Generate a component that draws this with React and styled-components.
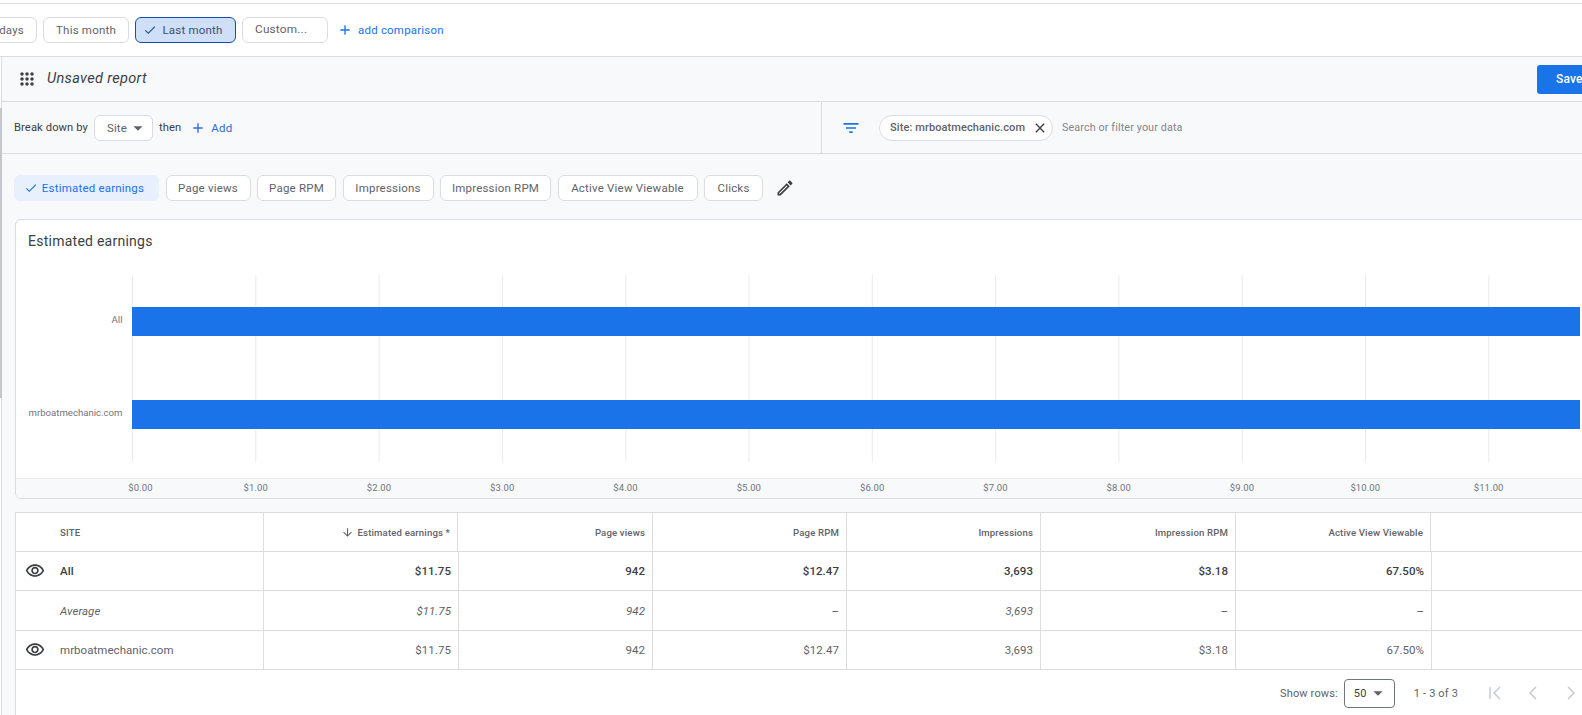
import React from 'react';
import styled, { createGlobalStyle } from 'styled-components';

const GlobalStyle = createGlobalStyle`
html, body {
  margin:0;
  padding:0;
  background:#fff;
  overflow:hidden;
}
body {
  font-family:Roboto, "Liberation Sans", sans-serif;
  color:#3c4043;
}
`;

const Page = styled.div`
width:1582px;
height:715px;
overflow:hidden;
position:relative;
background:#fff;
`;

const DateBar = styled.div`
height:52px;
margin-top:3px;
border-top:1px solid #dadce0;
border-bottom:1px solid #dadce0;
display:flex;
align-items:center;
gap:6px;
`;

const Chip = styled.div`
box-sizing:border-box;
height:26px;
width:${(p) => p.$width}px;
flex:none;
display:flex;
align-items:center;
justify-content:center;
gap:5px;
padding-right:${(p) => (p.$selected ? 5 : 0)}px;
background:${(p) => (p.$selected ? '#cfdff7' : '#fff')};
border:1px solid ${(p) => (p.$selected ? '#174ea6' : '#dadce0')};
border-radius:6px;
font-size:11.5px;
letter-spacing:0.2px;
color:${(p) => (p.$selected ? '#3c4f76' : '#5f6368')};
white-space:nowrap;
`;

const FirstDateChip = styled(Chip)`
margin-left:-40px;
justify-content:flex-end;
padding-right:12px;
`;

const CustomChip = styled(Chip)`
justify-content:flex-start;
padding:0 0 3px 12px;
font-size:11.8px;
`;

const LinkAction = styled.div`
display:flex;
align-items:center;
gap:5px;
margin-left:${(p) => p.$offset || 0}px;
font-size:11.5px;
letter-spacing:0.2px;
color:${(p) => p.$color || '#1a73e8'};
`;

const Report = styled.div`
height:658px;
margin-left:1px;
border-left:1px solid #dadce0;
background:#f8f9fa;
display:flex;
flex-direction:column;
`;

const Thumb = styled.div`
position:absolute;
left:0;
top:108px;
width:2px;
height:290px;
background:#c4c6ca;
`;

const TitleRow = styled.div`
box-sizing:border-box;
height:45px;
flex:none;
display:flex;
align-items:center;
justify-content:space-between;
padding-left:18px;
border-bottom:1px solid #dadce0;
`;

const TitleGroup = styled.div`
display:flex;
align-items:center;
gap:13px;
`;

const ReportName = styled.div`
padding-bottom:2px;
font-size:14.5px;
font-style:italic;
letter-spacing:0.35px;
color:#3c4043;
`;

const SaveButton = styled.div`
box-sizing:border-box;
width:70px;
height:29px;
margin-right:-25px;
padding-left:19px;
display:flex;
align-items:center;
background:#1a73e8;
border-radius:3px;
color:#fff;
font-size:12px;
font-weight:500;
letter-spacing:0.2px;
`;

const FilterRow = styled.div`
box-sizing:border-box;
height:52px;
flex:none;
display:flex;
border-bottom:1px solid #dadce0;
`;

const BreakdownPane = styled.div`
box-sizing:border-box;
width:820px;
flex:none;
display:flex;
align-items:center;
padding-left:12px;
border-right:1px solid #dadce0;
font-size:11.2px;
letter-spacing:0.1px;
color:#3c4043;
`;

const SiteSelect = styled.div`
box-sizing:border-box;
width:59px;
height:26px;
margin:0 6px 0 6px;
padding-left:12px;
display:flex;
align-items:center;
background:#fff;
border:1px solid #dadce0;
border-radius:6px;
font-size:11.5px;
color:#5f6368;
`;

const FilterPane = styled.div`
flex:1;
display:flex;
align-items:center;
padding-left:19px;
`;

const SiteChip = styled.div`
box-sizing:border-box;
width:174px;
height:26px;
margin-left:18px;
padding:0 4px 0 10px;
display:flex;
align-items:center;
justify-content:space-between;
background:#fff;
border:1px solid #dadce0;
border-radius:13px;
font-size:11px;
font-weight:500;
letter-spacing:0.1px;
color:#5f6368;
white-space:nowrap;
`;

const SearchHint = styled.div`
margin-left:9px;
font-size:10.7px;
letter-spacing:0.15px;
color:#80868b;
`;

const MetricRow = styled.div`
height:65px;
flex:none;
display:flex;
align-items:center;
gap:6.5px;
padding:2px 0 0 12px;
box-sizing:border-box;
`;

const MetricChip = styled(Chip)`
gap:4px;
background:${(p) => (p.$selected ? '#e8f0fe' : '#fff')};
border:1px solid ${(p) => (p.$selected ? '#e8f0fe' : '#dadce0')};
color:${(p) => (p.$selected ? '#1a73e8' : '#5f6368')};
`;

const PencilWrap = styled.div`
display:flex;
margin-left:5px;
`;

const ChartCard = styled.div`
box-sizing:border-box;
height:280px;
flex:none;
margin-left:13px;
width:1600px;
display:flex;
flex-direction:column;
background:#fff;
border:1px solid #dadce0;
border-radius:6px;
overflow:hidden;
`;

const ChartTitle = styled.div`
height:55px;
flex:none;
box-sizing:border-box;
padding:13px 0 0 12px;
font-size:14px;
letter-spacing:0.25px;
color:#3c4043;
`;

const ChartBody = styled.div`
height:187px;
flex:none;
display:flex;
`;

const BarLabels = styled.div`
box-sizing:border-box;
width:115.5px;
flex:none;
display:flex;
flex-direction:column;
padding-right:9px;
`;

const BarLabel = styled.div`
flex:1;
display:flex;
align-items:center;
justify-content:flex-end;
padding-bottom:5px;
font-size:9.6px;
color:#70757a;
white-space:nowrap;
`;

const Axis = styled.div`
margin-top:16px;
flex:1;
display:flex;
padding-left:71px;
background:#f8f9fa;
border-top:1px solid #e8eaed;
`;

const Tick = styled.div`
width:123.3px;
flex:none;
display:flex;
align-items:center;
justify-content:center;
padding-bottom:2px;
font-size:9.5px;
letter-spacing:0.1px;
color:#70757a;
&:first-child {
  width:107px;
}
`;

const TableCard = styled.div`
margin:13px 0 0 13px;
width:1600px;
flex:1;
background:#fff;
border:1px solid #dadce0;
border-bottom:none;
`;

const RowGrid = styled.div`
box-sizing:border-box;
height:${(p) => p.$height}px;
display:grid;
grid-template-columns:${(p) => (p.$header ? '248px 194px 195px 194px 194px 195px 195px 1fr' : '248px 195px 194px 194px 194px 195px 196px 1fr')};
border-bottom:1px solid #dadce0;
`;

const Cell = styled.div`
box-sizing:border-box;
display:flex;
align-items:center;
justify-content:flex-end;
padding:0 7px;
border-right:1px solid #dadce0;
white-space:nowrap;
font-size:${(p) => (p.$header ? '9.6px' : '11.5px')};
font-weight:${(p) => (p.$bold || p.$header ? 500 : 400)};
font-style:${(p) => (p.$italic ? 'italic' : 'normal')};
letter-spacing:${(p) => (p.$header ? '0.15px' : '0.05px')};
color:${(p) => (p.$bold ? '#3c4043' : '#5f6368')};
&:last-child {
  border-right:none;
}
`;

const NameCell = styled(Cell)`
justify-content:flex-start;
padding:0;
`;

const EyeSlot = styled.div`
width:44px;
flex:none;
display:flex;
justify-content:center;
padding-right:7px;
box-sizing:border-box;
`;

const SortIcon = styled.span`
display:flex;
margin-right:4px;
`;

const Pager = styled.div`
display:flex;
align-items:center;
height:46px;
padding-left:1264px;
font-size:11px;
letter-spacing:0.15px;
color:#5f6368;
`;

const RowsSelect = styled.div`
box-sizing:border-box;
width:51px;
height:29px;
margin:0 19px 0 6px;
padding-left:9px;
display:flex;
align-items:center;
border:1px solid #70757a;
border-radius:4px;
color:#3c4043;
`;

const PagerButtons = styled.div`
display:flex;
align-items:center;
gap:22px;
margin-left:29px;
`;

const Icon = ({ size = 18, color = '#5f6368', children }) => (
  <svg width={size} height={size} viewBox="0 0 24 24" fill={color} style={{ flex: 'none' }}>
    {children}
  </svg>
);

const PlusIcon = ({ color }) => (
  <Icon size={16} color={color}>
    <path d="M19 13h-6v6h-2v-6H5v-2h6V5h2v6h6v2z" />
  </Icon>
);

const CheckIcon = ({ color }) => (
  <Icon size={14} color={color}>
    <path d="M9 16.2 4.8 12l-1.4 1.4L9 19 21 7l-1.4-1.4L9 16.2z" />
  </Icon>
);

const DropIcon = ({ color = '#5f6368' }) => (
  <Icon size={22} color={color}>
    <path d="M7 10l5 5 5-5H7z" />
  </Icon>
);

const EyeIcon = () => (
  <Icon size={20} color="#3c4043">
    <path d="M12 6c3.79 0 7.17 2.13 8.82 5.5C19.17 14.87 15.79 17 12 17s-7.17-2.13-8.82-5.5C4.83 8.13 8.21 6 12 6m0-2C7 4 2.73 7.11 1 11.5 2.73 15.89 7 19 12 19s9.27-3.11 11-7.5C21.27 7.11 17 4 12 4zm0 5c1.38 0 2.5 1.12 2.5 2.5S13.38 14 12 14s-2.5-1.12-2.5-2.5S10.62 9 12 9m0-2c-2.48 0-4.5 2.02-4.5 4.5S9.52 16 12 16s4.5-2.02 4.5-4.5S14.48 7 12 7z" />
  </Icon>
);

const AppsIcon = () => (
  <svg width="14" height="14" viewBox="0 0 14 14" fill="#3c4043" style={{ flex: 'none' }}>
    {[2, 7, 12].map((y) =>
      [2, 7, 12].map((x) => <circle key={`${x}-${y}`} cx={x} cy={y} r="1.75" />)
    )}
  </svg>
);

const ChevronIcon = ({ d }) => (
  <svg width="16" height="16" viewBox="0 0 16 16" fill="none" stroke="#c4c7cb" strokeWidth="1.4" style={{ flex: 'none' }}>
    <path d={d} />
  </svg>
);

const dateChips = [
  { label: 'This month', width: 86 },
  { label: 'Last month', width: 101, selected: true },
];

const metrics = [
  { label: 'Estimated earnings', width: 145, selected: true },
  { label: 'Page views', width: 85 },
  { label: 'Page RPM', width: 79 },
  { label: 'Impressions', width: 91 },
  { label: 'Impression RPM', width: 111 },
  { label: 'Active View Viewable', width: 140 },
  { label: 'Clicks', width: 59 },
];

const columns = ['Page views', 'Page RPM', 'Impressions', 'Impression RPM', 'Active View Viewable'];

const rows = [
  { key: 'all', name: 'All', height: 39, bold: true, eye: true, values: ['$11.75', '942', '$12.47', '3,693', '$3.18', '67.50%'] },
  { key: 'avg', name: 'Average', height: 40, italic: true, values: ['$11.75', '942', '–', '3,693', '–', '–'] },
  { key: 'site', name: 'mrboatmechanic.com', height: 39, eye: true, values: ['$11.75', '942', '$12.47', '3,693', '$3.18', '67.50%'] },
];

const GRID_STEP = 123.3;

const BarPlot = () => (
  <svg width="1470" height="187" style={{ flex: 'none', display: 'block' }}>
    {Array.from({ length: 12 }, (_, i) => (
      <line key={i} x1={0.5 + i * GRID_STEP} x2={0.5 + i * GRID_STEP} y1="0" y2="187" stroke="#e8eaed" strokeWidth="1" />
    ))}
    <rect x="0" y="32" width="1448" height="29" fill="#1a73e8" />
    <rect x="0" y="125" width="1448" height="29" fill="#1a73e8" />
  </svg>
);

const App = () => (
  <Page>
    <GlobalStyle />
    <DateBar>
      <FirstDateChip $width={77}>days</FirstDateChip>
      {dateChips.map((c) => (
        <Chip key={c.label} $width={c.width} $selected={c.selected}>
          {c.selected && <CheckIcon color="#174ea6" />}
          {c.label}
        </Chip>
      ))}
      <CustomChip $width={86}>Custom...</CustomChip>
      <LinkAction $offset={3}>
        <PlusIcon color="#1a73e8" />
        add comparison
      </LinkAction>
    </DateBar>
    <Thumb />
    <Report>
      <TitleRow>
        <TitleGroup>
          <AppsIcon />
          <ReportName>Unsaved report</ReportName>
        </TitleGroup>
        <SaveButton>Save</SaveButton>
      </TitleRow>
      <FilterRow>
        <BreakdownPane>
          Break down by
          <SiteSelect>
            Site
            <DropIcon />
          </SiteSelect>
          then
          <LinkAction $offset={9} $color="#3367d6">
            <PlusIcon color="#3367d6" />
            Add
          </LinkAction>
        </BreakdownPane>
        <FilterPane>
          <Icon size={20} color="#1a73e8">
            <path d="M10 18h4v-2h-4v2zM3 6v2h18V6H3zm3 7h12v-2H6v2z" />
          </Icon>
          <SiteChip>
            Site: mrboatmechanic.com
            <Icon size={16} color="#3c4043">
              <path d="M19 6.41 17.59 5 12 10.59 6.41 5 5 6.41 10.59 12 5 17.59 6.41 19 12 13.41 17.59 19 19 17.59 13.41 12z" />
            </Icon>
          </SiteChip>
          <SearchHint>Search or filter your data</SearchHint>
        </FilterPane>
      </FilterRow>
      <MetricRow>
        {metrics.map((m) => (
          <MetricChip key={m.label} $width={m.width} $selected={m.selected}>
            {m.selected && <CheckIcon color="#1a73e8" />}
            {m.label}
          </MetricChip>
        ))}
        <PencilWrap>
          <Icon size={20} color="#3c4043">
            <path d="M14.06 9.02l.92.92L5.92 19H5v-.92l9.06-9.06M17.66 3c-.25 0-.51.1-.7.29l-1.83 1.83 3.75 3.75 1.83-1.83c.39-.39.39-1.02 0-1.41l-2.34-2.34c-.2-.2-.45-.29-.71-.29zm-3.6 3.19L3 17.25V21h3.75L17.81 9.94l-3.75-3.75z" />
          </Icon>
        </PencilWrap>
      </MetricRow>
      <ChartCard>
        <ChartTitle>Estimated earnings</ChartTitle>
        <ChartBody>
          <BarLabels>
            <BarLabel>All</BarLabel>
            <BarLabel>mrboatmechanic.com</BarLabel>
          </BarLabels>
          <BarPlot />
        </ChartBody>
        <Axis>
          {Array.from({ length: 12 }, (_, i) => (
            <Tick key={i}>${i}.00</Tick>
          ))}
        </Axis>
      </ChartCard>
      <TableCard>
        <RowGrid $header $height={39}>
          <NameCell $header>
            <EyeSlot />
            SITE
          </NameCell>
          <Cell $header>
            <SortIcon>
              <Icon size={13} color="#5f6368">
                <path d="M20 12l-1.41-1.41L13 16.17V4h-2v12.17l-5.58-5.59L4 12l8 8 8-8z" />
              </Icon>
            </SortIcon>
            Estimated earnings *
          </Cell>
          {columns.map((c) => (
            <Cell $header key={c}>{c}</Cell>
          ))}
          <Cell $header />
        </RowGrid>
        {rows.map((r) => (
          <RowGrid key={r.key} $height={r.height}>
            <NameCell $bold={r.bold} $italic={r.italic}>
              <EyeSlot>{r.eye && <EyeIcon />}</EyeSlot>
              {r.name}
            </NameCell>
            {r.values.map((v, i) => (
              <Cell key={i} $bold={r.bold} $italic={r.italic}>{v}</Cell>
            ))}
            <Cell />
          </RowGrid>
        ))}
        <Pager>
          Show rows:
          <RowsSelect>
            50
            <DropIcon />
          </RowsSelect>
          1 - 3 of 3
          <PagerButtons>
            <ChevronIcon d="M3 2v12M13 2 7 8l6 6" />
            <ChevronIcon d="M11 2 5 8l6 6" />
            <ChevronIcon d="m5 2 6 6-6 6" />
          </PagerButtons>
        </Pager>
      </TableCard>
    </Report>
  </Page>
);

export default App;
